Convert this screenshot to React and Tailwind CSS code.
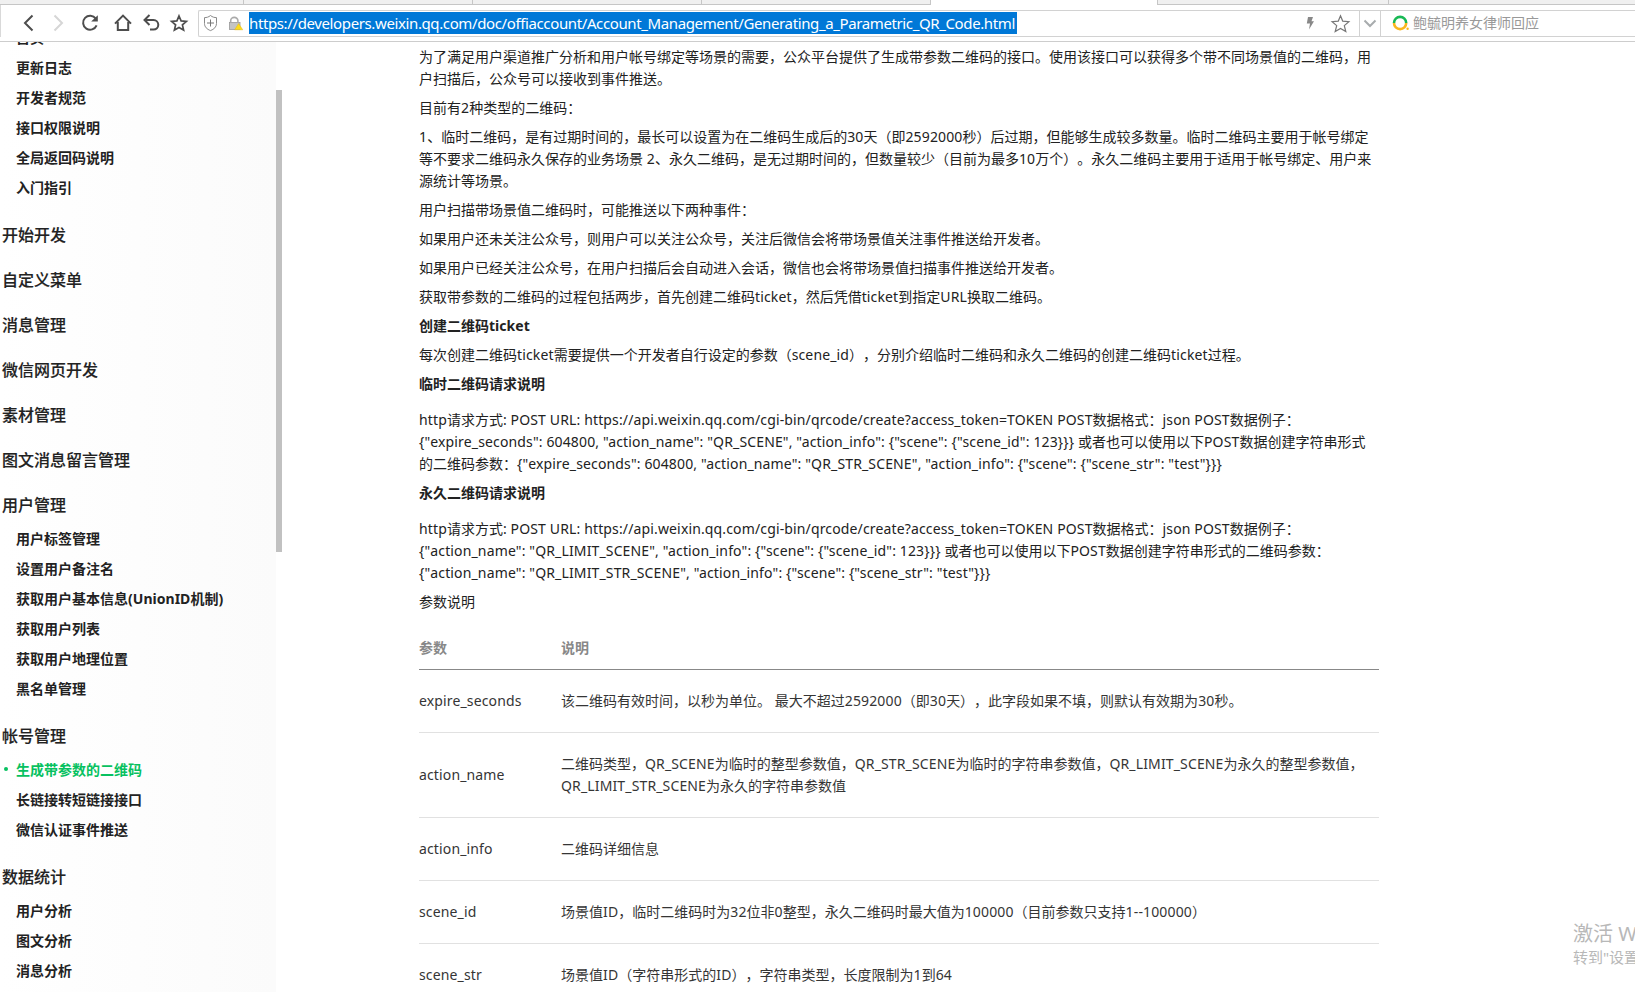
import { Fragment } from 'react'

const sections = [
  { items: ['首页', '更新日志', '开发者规范', '接口权限说明', '全局返回码说明', '入门指引'] },
  { title: '开始开发' },
  { title: '自定义菜单' },
  { title: '消息管理' },
  { title: '微信网页开发' },
  { title: '素材管理' },
  { title: '图文消息留言管理' },
  {
    title: '用户管理',
    items: [
      '用户标签管理',
      '设置用户备注名',
      '获取用户基本信息(UnionID机制)',
      '获取用户列表',
      '获取用户地理位置',
      '黑名单管理',
    ],
  },
  { title: '帐号管理', items: ['生成带参数的二维码', '长链接转短链接接口', '微信认证事件推送'] },
  { title: '数据统计', items: ['用户分析', '图文分析', '消息分析'] },
]

const activeItem = '生成带参数的二维码'

const content = [
  {
    lines: [
      '为了满足用户渠道推广分析和用户帐号绑定等场景的需要，公众平台提供了生成带参数二维码的接口。使用该接口可以获得多个带不同场景值的二维码，用',
      '户扫描后，公众号可以接收到事件推送。',
    ],
  },
  { lines: ['目前有2种类型的二维码：'] },
  {
    lines: [
      '1、临时二维码，是有过期时间的，最长可以设置为在二维码生成后的30天（即2592000秒）后过期，但能够生成较多数量。临时二维码主要用于帐号绑定',
      '等不要求二维码永久保存的业务场景 2、永久二维码，是无过期时间的，但数量较少（目前为最多10万个）。永久二维码主要用于适用于帐号绑定、用户来',
      '源统计等场景。',
    ],
  },
  { lines: ['用户扫描带场景值二维码时，可能推送以下两种事件：'] },
  { lines: ['如果用户还未关注公众号，则用户可以关注公众号，关注后微信会将带场景值关注事件推送给开发者。'] },
  { lines: ['如果用户已经关注公众号，在用户扫描后会自动进入会话，微信也会将带场景值扫描事件推送给开发者。'] },
  { lines: ['获取带参数的二维码的过程包括两步，首先创建二维码ticket，然后凭借ticket到指定URL换取二维码。'] },
  { type: 'heading', lines: ['创建二维码ticket'] },
  { lines: ['每次创建二维码ticket需要提供一个开发者自行设定的参数（scene_id），分别介绍临时二维码和永久二维码的创建二维码ticket过程。'] },
  { type: 'heading', lines: ['临时二维码请求说明'] },
  {
    type: 'block',
    lines: [
      'http请求方式: POST URL: https://api.weixin.qq.com/cgi-bin/qrcode/create?access_token=TOKEN POST数据格式：json POST数据例子：',
      '{"expire_seconds": 604800, "action_name": "QR_SCENE", "action_info": {"scene": {"scene_id": 123}}} 或者也可以使用以下POST数据创建字符串形式',
      '的二维码参数：{"expire_seconds": 604800, "action_name": "QR_STR_SCENE", "action_info": {"scene": {"scene_str": "test"}}}',
    ],
  },
  { type: 'heading', lines: ['永久二维码请求说明'] },
  {
    type: 'block',
    lines: [
      'http请求方式: POST URL: https://api.weixin.qq.com/cgi-bin/qrcode/create?access_token=TOKEN POST数据格式：json POST数据例子：',
      '{"action_name": "QR_LIMIT_SCENE", "action_info": {"scene": {"scene_id": 123}}} 或者也可以使用以下POST数据创建字符串形式的二维码参数：',
      '{"action_name": "QR_LIMIT_STR_SCENE", "action_info": {"scene": {"scene_str": "test"}}}',
    ],
  },
  { lines: ['参数说明'] },
]

const params = [
  { name: 'expire_seconds', lines: ['该二维码有效时间，以秒为单位。 最大不超过2592000（即30天），此字段如果不填，则默认有效期为30秒。'] },
  {
    name: 'action_name',
    lines: [
      '二维码类型，QR_SCENE为临时的整型参数值，QR_STR_SCENE为临时的字符串参数值，QR_LIMIT_SCENE为永久的整型参数值，',
      'QR_LIMIT_STR_SCENE为永久的字符串参数值',
    ],
  },
  { name: 'action_info', lines: ['二维码详细信息'] },
  { name: 'scene_id', lines: ['场景值ID，临时二维码时为32位非0整型，永久二维码时最大值为100000（目前参数只支持1--100000）'] },
  { name: 'scene_str', lines: ['场景值ID（字符串形式的ID），字符串类型，长度限制为1到64'] },
]

// Latin runs get their own letter spacing, the Chinese text keeps none
function Mixed({ text, bold }) {
  return text.split(/([\x20-\x7e]+)/).map((part, i) =>
    i % 2 ? (
      <span key={i} className={bold ? 'tracking-[0.03px]' : 'tracking-[0.14px]'}>
        {part}
      </span>
    ) : (
      part
    )
  )
}

function Lines({ lines, bold }) {
  return lines.map((line, i) => (
    <Fragment key={i}>
      {i > 0 && <br />}
      <Mixed text={line} bold={bold} />
    </Fragment>
  ))
}

function TabStrip() {
  return (
    <div className="flex h-[5px] w-full shrink-0 bg-white">
      <div className="w-[244px] shrink-0 border-r border-b border-[#c6c6c6] bg-[#f0f0f0]" />
      <div className="w-[229px] shrink-0 border-r border-b border-[#c6c6c6] bg-[#f0f0f0]" />
      <div className="w-[229px] shrink-0 border-r border-b border-[#c6c6c6] bg-[#f0f0f0]" />
      <div className="w-[229px] shrink-0 border-r border-b border-[#c6c6c6] bg-[#f0f0f0]" />
      <div className="w-[226px] shrink-0" />
      <div className="w-[232px] shrink-0 border-x border-b border-[#c6c6c6] bg-[#f0f0f0]" />
      <div className="flex-1 border-b border-[#c6c6c6] bg-[#f0f0f0]" />
    </div>
  )
}

function Toolbar() {
  return (
    <div className="flex h-[37px] w-full shrink-0 items-center border-b border-[#cdcdcd] bg-white">
      <svg width="198" height="36" viewBox="0 5 198 36" fill="none" stroke="#4d4d4d" strokeWidth="2" className="shrink-0">
        <path d="M0.5 5V37" stroke="#d9d9d9" strokeWidth="1" />
        <path d="M32.5 15.5L25 23L32.5 30.5" />
        <path d="M54.5 15.5L62 23L54.5 30.5" stroke="#d6d6d6" />
        <path d="M95.8 18.6A7 7 0 1 0 96.6 25.4" />
        <path d="M97.8 15.2V21.6H91.2Z" fill="#4d4d4d" stroke="none" />
        <path d="M115 23.6L123 15.6L131 23.6M117.8 22V30H121M128.2 22V30H125M120 30H126" />
        <path d="M146 20H153.5A4.7 4.7 0 0 1 153.5 29.6H150" />
        <path d="M149.5 15L144.5 20L149.5 25" />
        <path d="M179 16L181.1 20.9L186.4 21.4L182.4 24.9L183.6 30.1L179 27.4L174.4 30.1L175.6 24.9L171.6 21.4L176.9 20.9Z" strokeWidth="1.7" />
      </svg>
      <div className="flex h-[27px] w-[1161px] shrink-0 items-center rounded-l-[2px] border border-r-0 border-[#d2d2d2]">
        <svg width="50" height="25" viewBox="199 10 50 25" fill="none" className="shrink-0">
          <path d="M210.5 14.5C208.5 16.2 206.5 16.6 204.5 16.6V22.5C204.5 26 207 28.2 210.5 29.6C214 28.2 216.5 26 216.5 22.5V16.6C214.5 16.6 212.5 16.2 210.5 14.5Z" stroke="#8a8a8a" />
          <path d="M210.5 18.5V25.5M207 22H214" stroke="#777" />
          <path d="M230.7 21V19.6A3.6 3.2 0 0 1 237.9 19.6V21" stroke="#aaa" strokeWidth="1.6" />
          <rect x="229.4" y="21.4" width="10.6" height="7.2" fill="#c4c4c4" stroke="#9a9a9a" strokeWidth="0.8" />
          <path d="M238.6 22.5L242.8 28.8H234.6Z" fill="#fcdc1c" stroke="#e0ae10" strokeWidth="0.4" />
        </svg>
        <span className="flex h-[22px] w-[768px] items-center bg-[#0078d7] text-[15px] leading-[22px] tracking-[-0.38px] whitespace-nowrap text-white">
          https://developers.weixin.qq.com/doc/offiaccount/Account_Management/Generating_a_Parametric_QR_Code.html
        </span>
        <svg width="60" height="25" viewBox="1299 10 60 25" fill="none" className="ml-auto shrink-0">
          <path d="M1308 16H1313L1311.5 20.2H1314L1309 28.5L1310 22.6H1306.8Z" fill="#888" />
          <path d="M1340.5 14.8L1342.7 20.1L1348.9 20.7L1344.3 24.6L1345.8 30.5L1340.5 27.5L1335.2 30.5L1336.7 24.6L1332.1 20.7L1338.3 20.1Z" stroke="#777" strokeWidth="1.2" />
        </svg>
      </div>
      <div className="flex h-[27px] w-[22px] shrink-0 items-center justify-center border border-[#d2d2d2]">
        <svg width="14" height="10" viewBox="0 0 14 10" fill="none" stroke="#a8acae" strokeWidth="2">
          <path d="M1.5 2.5L7 8L12.5 2.5" />
        </svg>
      </div>
      <div className="flex h-[27px] flex-1 items-center border-y border-[#d2d2d2] pl-[11px]">
        <svg width="18" height="18" viewBox="0 0 18 18" fill="none" strokeWidth="2.6">
          <path d="M2 9A6.1 6.1 0 1 1 14.2 9" stroke="#19b955" />
          <path d="M2 9A6.1 6.1 0 0 0 14.2 9" stroke="#f9b61e" />
          <circle cx="15.6" cy="14.8" r="1.2" fill="#f9b61e" />
        </svg>
        <span className="mb-px ml-[3px] text-[14px] leading-[22px] text-[#999]">鲍毓明养女律师回应</span>
      </div>
    </div>
  )
}

function Sidebar() {
  return (
    <aside className="flex h-full w-[282px] shrink-0 overflow-hidden">
      <nav className="w-[276px] bg-gradient-to-r from-white to-[#fbfbfb] text-[#222]">
        {sections.map((section, i) => (
          <div key={i} className={i === 0 ? '-mt-5 mb-[21px]' : 'mb-5'}>
            {section.title && (
              <h3 className="h-[25px] pl-0.5 text-[16px] leading-6 font-medium [-webkit-text-stroke:0.15px]">
                {section.title}
              </h3>
            )}
            {section.items && (
              <ul className={section.title ? 'mt-[5px] mb-[21px]' : ''}>
                {section.items.map((item) => (
                  <li
                    key={item}
                    className={
                      item === activeItem
                        ? 'flex h-[30px] items-center pl-1 text-[14px] font-bold text-[#07c160]'
                        : 'flex h-[30px] items-center pl-4 text-[14px] font-bold'
                    }
                  >
                    {item === activeItem && <i className="mr-2 size-1 rounded-full bg-[#07c160]" />}
                    <span>
                      <Mixed text={item} bold />
                    </span>
                  </li>
                ))}
              </ul>
            )}
          </div>
        ))}
      </nav>
      <div className="mt-12 h-[462px] w-1.5 bg-[#c1c1c1]" />
    </aside>
  )
}

function ParamTable() {
  return (
    <table className="mt-6 w-full border-collapse text-left">
      <thead>
        <tr className="border-b border-[#888] text-[#888]">
          <th className="w-[142px] pb-2.5 font-bold">参数</th>
          <th className="pb-2.5 font-bold">说明</th>
        </tr>
      </thead>
      <tbody className="text-[#353535]">
        {params.map((param) => (
          <tr key={param.name} className="border-b border-[#e1e1e1]">
            <td className="py-5">
              <Mixed text={param.name} />
            </td>
            <td className="py-5">
              <Lines lines={param.lines} />
            </td>
          </tr>
        ))}
      </tbody>
    </table>
  )
}

export default function App() {
  return (
    <div className="relative flex h-[992px] w-[1635px] flex-col overflow-hidden bg-white font-['Noto_Sans','Noto_Sans_CJK_SC',sans-serif] [text-spacing-trim:space-all]">
      <TabStrip />
      <Toolbar />
      <div className="flex min-h-0 flex-1 overflow-hidden">
        <Sidebar />
        <main className="ml-[137px] w-[960px] pt-1 text-[14px] leading-[22px] whitespace-nowrap text-[#222]">
          {content.map((block, i) => (
            <p
              key={i}
              className={
                block.type === 'heading'
                  ? 'mb-[7px] font-bold'
                  : block.type === 'block'
                    ? 'mt-3.5 mb-[7px]'
                    : 'mb-[7px] last-of-type:mb-0'
              }
            >
              <Lines lines={block.lines} bold={block.type === 'heading'} />
            </p>
          ))}
          <ParamTable />
        </main>
      </div>

      {/* Windows activation notice sits on top of the page */}
      <div className="absolute top-[920px] left-[1573px] w-[120px] whitespace-nowrap text-[#b8b8b8]">
        <div className="text-[20px] leading-7">激活 Windows</div>
        <div className="-mt-px text-[15px] leading-5">转到"设置"以激活</div>
      </div>
    </div>
  )
}
